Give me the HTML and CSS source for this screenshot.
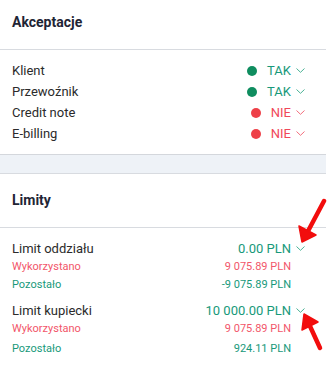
FILE: index.html
```html
<!DOCTYPE html>
<html lang="pl">
<head>
    <meta charset="UTF-8">
    <meta name="viewport" content="width=device-width, initial-scale=1.0">
    <title>Akceptacje i limity</title>
    <link rel="stylesheet" href="styles.css">
</head>
<body>
    <div class="panel">
        <div class="panel-head akc">
            <h2>Akceptacje</h2>
        </div>
        <div class="panel-body akc-body">
            <div class="row">
                <span class="label">Klient</span>
                <span class="status ok"><i class="dot"></i>TAK<svg class="chev" viewBox="0 0 9 5"><path d="M0.5 0.5 L4.5 4.3 L8.5 0.5"/></svg></span>
            </div>
            <div class="row">
                <span class="label">Przewoźnik</span>
                <span class="status ok"><i class="dot"></i>TAK<svg class="chev" viewBox="0 0 9 5"><path d="M0.5 0.5 L4.5 4.3 L8.5 0.5"/></svg></span>
            </div>
            <div class="row">
                <span class="label">Credit note</span>
                <span class="status bad"><i class="dot"></i>NIE<svg class="chev" viewBox="0 0 9 5"><path d="M0.5 0.5 L4.5 4.3 L8.5 0.5"/></svg></span>
            </div>
            <div class="row">
                <span class="label">E-billing</span>
                <span class="status bad"><i class="dot"></i>NIE<svg class="chev" viewBox="0 0 9 5"><path d="M0.5 0.5 L4.5 4.3 L8.5 0.5"/></svg></span>
            </div>
        </div>
    </div>

    <div class="gap"></div>

    <div class="panel last">
        <div class="panel-head lim">
            <h2>Limity</h2>
        </div>
        <div class="panel-body lim-body">
            <div class="group">
                <div class="row main">
                    <span class="label">Limit oddziału</span>
                    <span class="value ok">0.00 PLN<svg class="chev" viewBox="0 0 9 5"><path d="M0.5 0.5 L4.5 4.3 L8.5 0.5"/></svg></span>
                </div>
                <div class="row sub bad">
                    <span>Wykorzystano</span>
                    <span>9 075.89 PLN</span>
                </div>
                <div class="row sub ok">
                    <span>Pozostało</span>
                    <span>-9 075.89 PLN</span>
                </div>
            </div>
            <div class="group second">
                <div class="row main">
                    <span class="label">Limit kupiecki</span>
                    <span class="value ok">10 000.00 PLN<svg class="chev" viewBox="0 0 9 5"><path d="M0.5 0.5 L4.5 4.3 L8.5 0.5"/></svg></span>
                </div>
                <div class="row sub bad">
                    <span>Wykorzystano</span>
                    <span>9 075.89 PLN</span>
                </div>
                <div class="row sub ok">
                    <span>Pozostało</span>
                    <span>924.11 PLN</span>
                </div>
            </div>
        </div>
    </div>

    <!-- adnotacje (czerwone strzałki) -->
    <svg class="marks" width="327" height="371" viewBox="0 0 327 371">
        <line x1="324" y1="201" x2="307" y2="233"/>
        <polygon points="302,242 299,226 316,235"/>
        <line x1="320" y1="348" x2="309" y2="324"/>
        <polygon points="304,314 302,330 318,322"/>
    </svg>
</body>
</html>
```

FILE: styles.css
```css
* {
    box-sizing: border-box;
    margin: 0;
    padding: 0;
}
body {
    font-family: Roboto, 'Liberation Sans', sans-serif;
    background: #fff;
    color: #2b2b2b;
    width: 327px;
    height: 371px;
    overflow: hidden;
    position: relative;
}
.panel {
    width: 326px;
    background: #fff;
    border-bottom: 1px solid #d4d7dc;
}
.panel.last {
    border-bottom: none;
}
.gap {
    width: 326px;
    height: 19px;
    background: #eef2f7;
    border-bottom: 1px solid #d8dbe0;
}
.panel-head {
    padding: 0 12px;
    border-bottom: 1px solid #d8dbe0;
}
.panel-head h2 {
    font-size: 14px;
    font-weight: 700;
    line-height: 18px;
    color: #1f2535;
}
.akc {
    padding-top: 13px;
    padding-bottom: 18px;
}
.lim {
    padding-top: 17px;
    padding-bottom: 18px;
}
.panel-body {
    padding: 10px 21px 10px 12px;
}
.row {
    display: flex;
    justify-content: space-between;
    align-items: center;
}
.akc-body .row {
    height: 21px;
    font-size: 13px;
}
.status {
    display: flex;
    align-items: center;
}
.dot {
    width: 10px;
    height: 10px;
    border-radius: 50%;
    margin-right: 10px;
}
.ok {
    color: #17997a;
}
.bad {
    color: #f0475a;
}
.row.sub.bad {
    color: #f2566a;
}
.status.ok .dot {
    background: #0f8d5f;
}
.status.bad .dot {
    background: #ee4048;
}
.chev {
    width: 9px;
    height: 5px;
    margin-left: 5px;
    fill: none;
    stroke-width: 1;
}
.ok .chev {
    stroke: #4bb295;
}
.bad .chev {
    stroke: #f36d7c;
}
.lim-body {
    padding-top: 11px;
}
.row.main {
    height: 18px;
    font-size: 13px;
}
.value {
    display: flex;
    align-items: center;
}
.row.sub {
    height: 18.5px;
    font-size: 11px;
    padding-right: 14px;
}
.group.second {
    margin-top: 7px;
}
.group.second .row.sub {
    height: 19.5px;
}
.marks {
    position: absolute;
    top: 0;
    left: 0;
    pointer-events: none;
}
.marks line {
    stroke: #f20d0d;
    stroke-width: 4.5;
    stroke-linecap: round;
}
.marks polygon {
    fill: #f20d0d;
    stroke: #f20d0d;
    stroke-width: 1.5;
    stroke-linejoin: round;
}
```
